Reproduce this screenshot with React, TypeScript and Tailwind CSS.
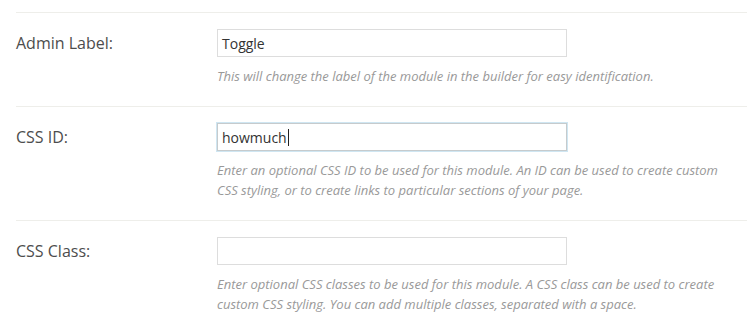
const fields = [
  {
    label: "Admin Label:",
    value: "Toggle",
    focused: false,
    help: "This will change the label of the module in the builder for easy identification.",
  },
  {
    label: "CSS ID:",
    value: "howmuch",
    focused: true,
    help: "Enter an optional CSS ID to be used for this module. An ID can be used to create custom CSS styling, or to create links to particular sections of your page.",
  },
  {
    label: "CSS Class:",
    value: "",
    focused: false,
    help: "Enter optional CSS classes to be used for this module. A CSS class can be used to create custom CSS styling. You can add multiple classes, separated with a space.",
  },
];

export default function App() {
  return (
    <div className="h-screen overflow-hidden bg-white pl-4 pt-3 font-['Open_Sans',sans-serif]">
      {fields.map((f) => (
        <div key={f.label} className="flex border-t border-[#eeeeea] pt-4 pb-5">
          {/* Label column */}
          <div className="flex h-[28px] w-[201px] shrink-0 items-center text-[16px] text-[#4d4d4d]">
            {f.label}
          </div>

          <div className="flex flex-col">
            <div
              className={
                f.focused
                  ? "flex h-[28px] w-[350px] items-center border border-[#c6cbcd] bg-white pl-[4px] text-[14px] text-[#333] shadow-[0_0_0_1px_#cfe6f2]"
                  : "flex h-[28px] w-[350px] items-center border border-[#dddddd] bg-white pl-[4px] text-[14px] text-[#333]"
              }
            >
              {f.value}
              {f.focused && <span className="ml-px h-[17px] w-px bg-[#222]" />}
            </div>
            <p className="mt-[9px] w-[510px] text-[13px] italic leading-[20px] text-[#999999]">
              {f.help}
            </p>
          </div>
        </div>
      ))}
    </div>
  );
}
